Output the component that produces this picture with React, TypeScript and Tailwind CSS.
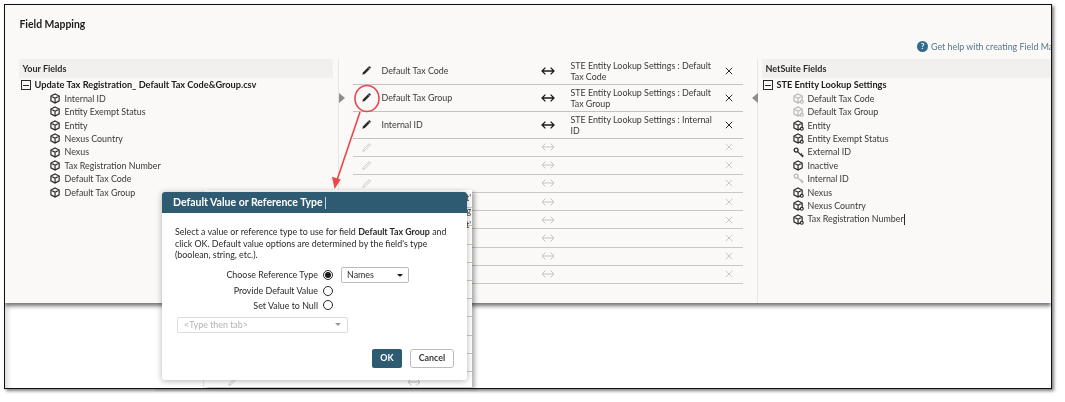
const sourceFields = [
  "Internal ID",
  "Entity Exempt Status",
  "Entity",
  "Nexus Country",
  "Nexus",
  "Tax Registration Number",
  "Default Tax Code",
  "Default Tax Group",
];

type IconKind = "box" | "gear" | "key";

const targetFields: { name: string; icon: IconKind; muted?: boolean }[] = [
  { name: "Default Tax Code", icon: "gear", muted: true },
  { name: "Default Tax Group", icon: "gear", muted: true },
  { name: "Entity", icon: "gear" },
  { name: "Entity Exempt Status", icon: "gear" },
  { name: "External ID", icon: "key" },
  { name: "Inactive", icon: "box" },
  { name: "Internal ID", icon: "key", muted: true },
  { name: "Nexus", icon: "gear" },
  { name: "Nexus Country", icon: "gear" },
  { name: "Tax Registration Number", icon: "gear" },
];

const mappings = [
  { from: "Default Tax Code", to: "STE Entity Lookup Settings : Default Tax Code" },
  { from: "Default Tax Group", to: "STE Entity Lookup Settings : Default Tax Group" },
  { from: "Internal ID", to: "STE Entity Lookup Settings : Internal ID" },
];

function FieldIcon({ kind, muted }: { kind: IconKind; muted?: boolean }) {
  const color = muted ? "#b9b7b4" : "#2b2a28";
  if (kind === "key") {
    return (
      <svg width="11" height="11" viewBox="0 0 12 12" fill="none" stroke={color} strokeWidth="1.4">
        <circle cx="3.4" cy="3.4" r="2.1" />
        <path d="M5 5 L11 11 M8.4 8.4 L9.8 7.2 M10 10 L11.2 8.8" />
      </svg>
    );
  }
  return (
    <svg width="11" height="11" viewBox="0 0 12 12" fill="none" stroke={color} strokeWidth="1.3">
      <path d="M5.5 1 L10 3.3 V8.5 L5.5 11 L1 8.5 V3.3 Z M1 3.3 L5.5 5.8 L10 3.3 M5.5 5.8 V11" />
      {kind === "gear" && <circle cx="9.6" cy="9.6" r="1.6" fill="#faf9f7" strokeWidth="1.2" />}
    </svg>
  );
}

function Pencil({ muted }: { muted?: boolean }) {
  return (
    <svg width="11" height="11" viewBox="0 0 12 12">
      {muted ? (
        <path d="M9 1.8 L10.4 3.2 L4 9.6 L2 10.2 L2.6 8.2 Z" fill="none" stroke="#c7c4c0" strokeWidth="1" />
      ) : (
        <>
          <path d="M9 1.2 L10.9 3.1 L4.2 9.8 L1.4 10.7 L2.3 7.9 Z" fill="#2b2a28" />
          <path d="M7.7 2.6 L9.5 4.4" stroke="#faf9f7" strokeWidth="0.6" />
        </>
      )}
    </svg>
  );
}

function Arrows({ muted }: { muted?: boolean }) {
  return (
    <svg width="14" height="10" viewBox="0 0 14 10" fill="none" stroke={muted ? "#c7c4c0" : "#1d1c1a"} strokeWidth={muted ? 1 : 1.3}>
      <path d="M1 5 H13 M4.4 1.6 L1 5 L4.4 8.4 M9.6 1.6 L13 5 L9.6 8.4" />
    </svg>
  );
}

function Cross({ muted }: { muted?: boolean }) {
  return (
    <svg width="8" height="8" viewBox="0 0 8 8" fill="none" stroke={muted ? "#c7c4c0" : "#2b2a28"} strokeWidth={muted ? 0.9 : 1}>
      <path d="M0.8 0.8 L7.2 7.2 M7.2 0.8 L0.8 7.2" />
    </svg>
  );
}

function Collapse() {
  return (
    <span className="flex h-[10px] w-[10px] shrink-0 items-center justify-center border border-[#2b2a28]">
      <span className="h-px w-[6px] bg-[#2b2a28]" />
    </span>
  );
}

function Radio({ checked }: { checked?: boolean }) {
  return (
    <span className="-mt-[1px] flex h-[10px] w-[10px] items-center justify-center rounded-full border border-[#2b2a28] bg-white">
      {checked && <span className="h-[6px] w-[6px] rounded-full bg-[#1d1c1a]" />}
    </span>
  );
}

function ColumnHeader({ label }: { label: string }) {
  return <div className="h-[19px] bg-[#f1f0ee] pl-[4px] text-[9px] leading-[19px] font-bold text-[#2b2a28]">{label}</div>;
}

function MappingRow({ from, to }: { from: string; to: string }) {
  return (
    <div className="flex h-[27px] items-center border-b-[1.5px] border-[#c4c2bf]">
      <span className="ml-[8px] flex w-[21px] shrink-0"><Pencil /></span>
      <span className="w-[153px] shrink-0 pt-[1px] text-[8.9px] text-[#3a3936]">{from}</span>
      <span className="flex w-[26px] shrink-0 justify-center"><Arrows /></span>
      <span className="ml-[10px] w-[146px] shrink-0 text-[8.9px] leading-[11px] text-[#3a3936]">{to}</span>
      <span className="ml-[8px] flex"><Cross /></span>
    </div>
  );
}

function EmptyRow() {
  return (
    <div className="flex h-[18.2px] items-center border-b border-[#c9c7c4]">
      <span className="ml-[8px] flex w-[21px] shrink-0"><Pencil muted /></span>
      <span className="w-[153px] shrink-0" />
      <span className="flex w-[26px] shrink-0 justify-center"><Arrows muted /></span>
      <span className="ml-[164px] flex"><Cross muted /></span>
    </div>
  );
}

function Modal() {
  return (
    <div className="absolute top-[192px] left-[162px] w-[305px] rounded-[3px] bg-white text-[8.9px] text-[#2b2a28] shadow-[0_1px_6px_rgba(0,0,0,0.3)]">
      <div className="flex h-[21px] items-center rounded-t-[3px] bg-[#2e5a72] pl-[11px] text-[10.5px] font-bold text-white">
        Default Value or Reference Type
        <span className="ml-[2px] h-[12px] w-px bg-[#c8d4da]" />
      </div>
      <p className="mt-[13px] ml-[13px] w-[280px] leading-[11.5px]">
        Select a value or reference type to use for field <b>Default Tax Group</b> and click OK. Default value options are determined by the field's type (boolean, string, etc.).
      </p>
      <div className="mt-[6px] flex h-[17px] items-center">
        <span className="w-[156px] text-right">Choose Reference Type</span>
        <span className="ml-[5px]"><Radio checked /></span>
        <span className="ml-[8px] flex h-[16px] w-[68px] items-center justify-between rounded-[2px] border border-[#bdbbb8] px-[5px]">
          Names
          <span className="border-x-[3.5px] border-t-[3.5px] border-x-transparent border-t-[#1d1c1a]" />
        </span>
      </div>
      <div className="flex h-[15px] items-center">
        <span className="w-[156px] text-right">Provide Default Value</span>
        <span className="ml-[5px]"><Radio /></span>
      </div>
      <div className="flex h-[14px] items-center">
        <span className="w-[156px] text-right">Set Value to Null</span>
        <span className="ml-[5px]"><Radio /></span>
      </div>
      <div className="mt-[4px] ml-[15px] flex h-[16px] w-[171px] items-center justify-between rounded-[2px] border border-[#dedcd9] px-[6px] text-[#b5b3b0]">
        &lt;Type then tab&gt;
        <span className="border-x-[3px] border-t-[3px] border-x-transparent border-t-[#9b9996]" />
      </div>
      <div className="mt-[16px] mr-[13px] mb-[12px] flex justify-end gap-[8px]">
        <span className="flex h-[19px] w-[30px] items-center justify-center rounded-[2px] bg-[#2e5a72] font-bold text-white">OK</span>
        <span className="flex h-[19px] w-[44px] items-center justify-center rounded-[3px] border border-[#bdbbb8] font-bold text-[#3a3936]">Cancel</span>
      </div>
    </div>
  );
}

export default function App() {
  return (
    <div className="relative h-[402px] w-[1065px] overflow-hidden bg-white font-['Lato',sans-serif] blur-[0.4px]">
      <div className="isolate mt-[4px] ml-[4px] flex h-[385px] w-[1048px] flex-col overflow-hidden border-[1.5px] border-[#111] shadow-[2px_2px_3px_rgba(0,0,0,0.5)]">
        <div className="relative z-10 h-[298px] shrink-0 bg-[#faf9f7] shadow-[0_3px_4px_rgba(0,0,0,0.55)]">
          <div className="h-[36px] pt-[13px] pl-[14.5px] text-[10.4px] leading-[13px] font-bold text-[#1d1c1a]">Field Mapping</div>
          <div className="ml-[912px] flex h-[17.5px] items-start gap-[3px] text-[8.9px] leading-[11px] whitespace-nowrap text-[#54768a]">
            <span className="flex h-[11px] w-[11px] shrink-0 items-center justify-center rounded-full bg-[#2f6d8a] text-[8px] font-bold text-white">?</span>
            Get help with creating Field Mapping
          </div>
          <div className="flex h-[244.5px]">
            <div className="ml-[13.5px] w-[314px] shrink-0">
              <ColumnHeader label="Your Fields" />
              <div className="mt-[1px] flex h-[13.4px] items-center gap-[4px] pl-[2px] text-[9.2px] font-bold text-[#1d1c1a]">
                <Collapse />
                Update Tax Registration_ Default Tax Code&amp;Group.csv
              </div>
              {sourceFields.map((field) => (
                <div key={field} className="flex h-[13.4px] items-center gap-[4px] pl-[31px] text-[8.9px] text-[#3a3936]">
                  <FieldIcon kind="box" />
                  {field}
                </div>
              ))}
            </div>
            <div className="relative ml-[5px] w-[15px] shrink-0 border-l border-[#e8e6e3]">
              <span className="absolute top-[34px] left-0 border-y-[5px] border-l-[6px] border-y-transparent border-l-[#8f8d8a]" />
            </div>
            <div className="-mt-[1px] w-[390px] shrink-0">
              {mappings.map((row) => (
                <MappingRow key={row.from} from={row.from} to={row.to} />
              ))}
              {Array.from({ length: 8 }, (_, i) => (
                <EmptyRow key={i} />
              ))}
            </div>
            <div className="relative ml-[14px] w-[5px] shrink-0 border-l border-[#e8e6e3]">
              <span className="absolute top-[34px] -left-[6px] border-y-[5px] border-r-[6px] border-y-transparent border-r-[#8f8d8a]" />
            </div>
            <div className="min-w-0 flex-1">
              <ColumnHeader label="NetSuite Fields" />
              <div className="mt-[1px] flex h-[13.4px] items-center gap-[4px] pl-[1px] text-[9.2px] font-bold text-[#1d1c1a]">
                <Collapse />
                STE Entity Lookup Settings
              </div>
              {targetFields.map((field, i) => (
                <div key={field.name} className="flex h-[13.4px] items-center gap-[4px] pl-[31px] text-[8.9px] text-[#3a3936]">
                  <FieldIcon kind={field.icon} muted={field.muted} />
                  {field.name}
                  {i === targetFields.length - 1 && <span className="-ml-[4px] h-[11px] w-px bg-[#2b2a28]" />}
                </div>
              ))}
            </div>
          </div>
        </div>
        <div className="flex-1 bg-white shadow-[inset_7px_0_5px_-4px_rgba(0,0,0,0.14)]" />
      </div>

      {/* pasted layer that sits behind the dialog */}
      <div className="absolute top-[190px] left-[203px] h-[197px] w-[269px] border-l border-[#e8e6e3] bg-white text-[8.9px] leading-[10px] text-[#3a3936] shadow-[3px_2px_4px_rgba(0,0,0,0.3)]">
        {Array.from({ length: 10 }, (_, i) => (
          <div key={i} className="h-[18.2px] border-b border-[#c9c7c4]" />
        ))}
        <span className="absolute top-[3px] right-[1px]">t'</span>
        <span className="absolute top-[16px] right-[1px]">g</span>
        <span className="absolute top-[30px] right-[1px]">t'</span>
        <span className="absolute top-[186px] left-[23px]"><Pencil muted /></span>
        <span className="absolute top-[187px] left-[203px]"><Arrows muted /></span>
      </div>
      <div className="absolute top-[389px] left-[155px] h-[4px] w-[323px] bg-gradient-to-b from-[#777] to-white" />

      <Modal />

      <svg className="absolute inset-0" width="1065" height="402" fill="none" stroke="#e8474c" strokeWidth="1.6">
        <ellipse cx="367" cy="98.5" rx="12" ry="13" />
        <path d="M360 112 L336 183" />
        <path d="M335 187 L333 178 L339.5 180 Z" fill="#e8474c" />
      </svg>
    </div>
  );
}
